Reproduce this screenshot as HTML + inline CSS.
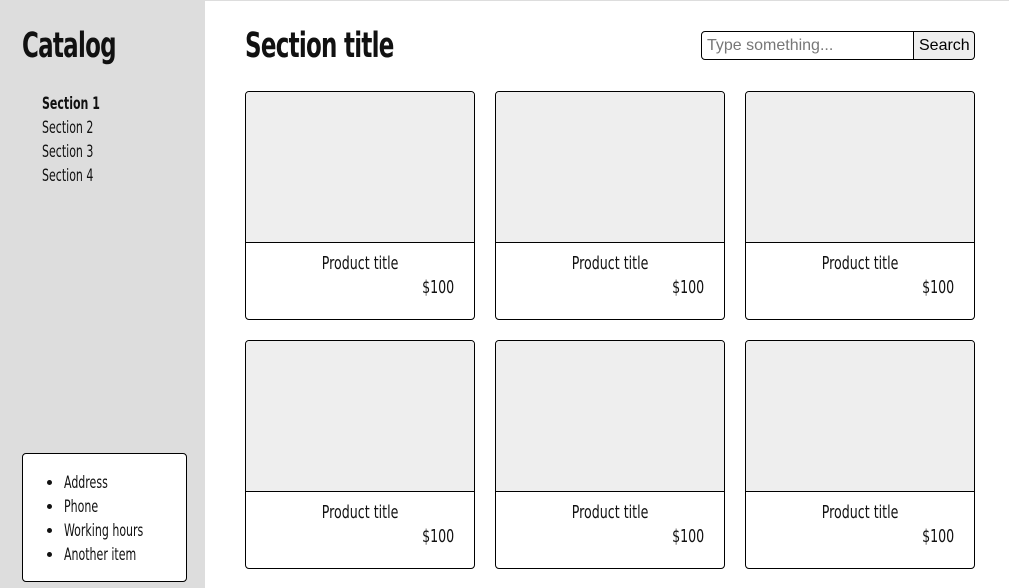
<!DOCTYPE html>
<html><head><meta charset="utf-8"><style>
*{box-sizing:border-box;margin:0;padding:0}
body{width:1009px;height:588px;position:relative;background:#fff;overflow:hidden;font-family:"DejaVu Sans Condensed","Liberation Sans",sans-serif;color:#111}
.n{display:inline-block;transform:scaleX(.72);transform-origin:left center;white-space:nowrap}
#top{position:absolute;left:205px;top:0;right:0;height:1px;background:#ddd}
#side{position:absolute;left:0;top:0;width:205px;height:588px;background:#ddd}
h1{position:absolute;font-weight:bold;font-size:35px;letter-spacing:-1px;white-space:nowrap}
h1 .n{transform:scaleX(.73)}
.nav{position:absolute;left:42px;top:92px;font-size:17px;line-height:24px}
.box{position:absolute;left:22px;top:453px;width:165px;height:129px;background:#fff;border:1px solid #000;border-radius:4px}
.box ul{margin:17px 0 0 41px;font-size:17px;line-height:24px}
.in{position:absolute;left:701px;top:31px;width:213px;height:29px;border:1px solid #000;border-radius:4px 0 0 4px;font-family:"Liberation Sans",sans-serif;font-size:16px;color:#777;padding:5px 0 0 5px}
.bt{position:absolute;left:913px;top:31px;width:62px;height:29px;border:1px solid #000;border-radius:0 4px 4px 0;background:#eee;font-family:"Liberation Sans",sans-serif;font-size:16px;padding:5px 0 0 5px;color:#000}
.c{position:absolute;width:230px;height:229px;border:1px solid #000;border-radius:4px;overflow:hidden}
.c .img{height:151px;background:#eee;border-bottom:1px solid #000}
.c .t{text-align:center;font-size:18px;margin-top:10px;line-height:22px}
.c .t .n{transform:scaleX(.78);transform-origin:center}
.c .p{text-align:right;font-size:18px;padding-right:20px;line-height:24px;margin-top:1px}
.c .p .n{transform:scaleX(.78);transform-origin:right center}
</style></head><body>
<div id="top"></div>
<div id="side">
<h1 style="left:22px;top:26px"><span class="n">Catalog</span></h1>
<div class="nav"><b class="n">Section 1</b><br><span class="n">Section 2</span><br><span class="n">Section 3</span><br><span class="n">Section 4</span></div>
<div class="box"><ul><li><span class="n">Address</span></li><li><span class="n">Phone</span></li><li><span class="n">Working hours</span></li><li><span class="n">Another item</span></li></ul></div>
</div>
<h1 style="left:245px;top:26px"><span class="n">Section title</span></h1>
<div class="in">Type something...</div><div class="bt">Search</div>
<div class="c" style="left:245px;top:91px"><div class="img"></div><div class="t"><span class="n">Product title</span></div><div class="p"><span class="n">$100</span></div></div>
<div class="c" style="left:495px;top:91px"><div class="img"></div><div class="t"><span class="n">Product title</span></div><div class="p"><span class="n">$100</span></div></div>
<div class="c" style="left:745px;top:91px"><div class="img"></div><div class="t"><span class="n">Product title</span></div><div class="p"><span class="n">$100</span></div></div>
<div class="c" style="left:245px;top:340px"><div class="img"></div><div class="t"><span class="n">Product title</span></div><div class="p"><span class="n">$100</span></div></div>
<div class="c" style="left:495px;top:340px"><div class="img"></div><div class="t"><span class="n">Product title</span></div><div class="p"><span class="n">$100</span></div></div>
<div class="c" style="left:745px;top:340px"><div class="img"></div><div class="t"><span class="n">Product title</span></div><div class="p"><span class="n">$100</span></div></div>
</body></html>
